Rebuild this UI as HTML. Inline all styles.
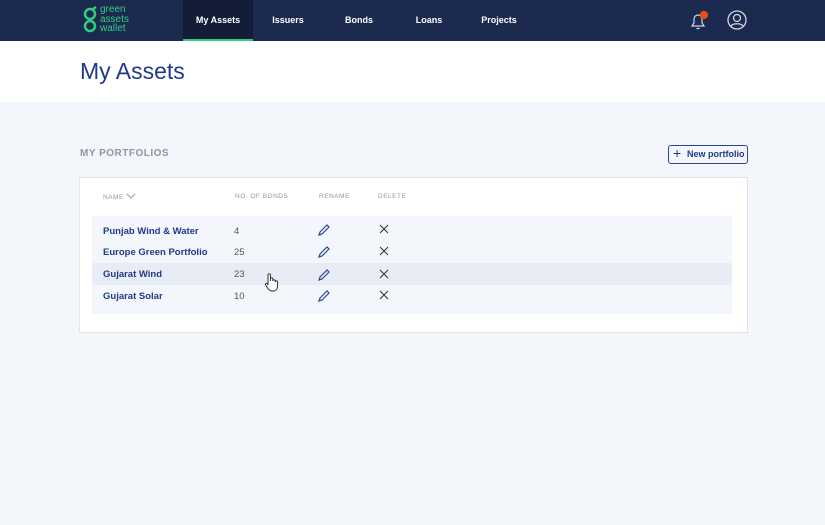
<!DOCTYPE html><html><head><style>
*{margin:0;padding:0;box-sizing:border-box}
body{width:825px;height:525px;background:#f3f6fa;font-family:"Liberation Sans",sans-serif;position:relative;overflow:hidden}
.hd{position:absolute;left:0;top:0;width:825px;height:41px;background:#1b2a4e}
.nav{position:absolute;top:0;height:41px;line-height:41px;color:#fff;font-size:9px;font-weight:bold;text-align:center}
.act{background:#131d38;border-bottom:2px solid #2fcf7f}
.logo{position:absolute;left:100px;top:5px;color:#2fcf7f;font-size:10px;line-height:9.5px}
.wb{position:absolute;top:41px;left:0;width:825px;height:61px;background:#fff}
h1{position:absolute;left:80px;top:58px;font-size:23px;font-weight:normal;color:#1f3a8a}
.sec{position:absolute;left:80px;top:148px;font-size:10px;font-weight:bold;color:#8e97aa;letter-spacing:.5px}
.btn{position:absolute;left:668px;top:145px;width:80px;height:19px;border:1px solid #2f4497;border-radius:3px;color:#1f3a8a;font-size:9px;font-weight:bold;line-height:17px;padding-left:18px}
.card{position:absolute;left:79px;top:177px;width:669px;height:156px;background:#fff;border:1px solid #dfe3ea}
.th{position:absolute;top:193px;font-size:6.5px;color:#8e97aa;letter-spacing:.5px}
.rows{position:absolute;left:92px;top:216px;width:640px;height:98px;background:#f3f6fa}
.r{position:absolute;left:92px;width:640px;height:22px;font-size:9.5px;line-height:22px}
.n{position:absolute;left:11px;color:#1f3a8a;font-weight:bold}
.c{position:absolute;left:142px;color:#555}
</style></head><body>
<div class="hd">
<svg style="position:absolute;left:82px;top:6px" width="16" height="28" viewBox="0 0 16 28"><g fill="none" stroke="#2fcf7f" stroke-width="2.5"><circle cx="8" cy="8" r="5"/><circle cx="8" cy="20" r="5"/><path d="M11 3l3-2"/></g></svg>
<div class="logo">green<br>assets<br>wallet</div>
<div class="nav act" style="left:183px;width:70px">My Assets</div>
<div class="nav" style="left:268px;width:40px">Issuers</div>
<div class="nav" style="left:340px;width:38px">Bonds</div>
<div class="nav" style="left:410px;width:38px">Loans</div>
<div class="nav" style="left:478px;width:42px">Projects</div>
<svg style="position:absolute;left:688px;top:10px" width="22" height="22" viewBox="0 0 22 22"><path d="M4 16h12l-2-3v-4a4 4 0 0 0-8 0v4z M8.5 18.5h3" fill="none" stroke="#cfd5e3" stroke-width="1.2"/><circle cx="16" cy="5" r="4" fill="#f04d12"/></svg>
<svg style="position:absolute;left:727px;top:10px" width="20" height="20" viewBox="0 0 20 20"><g fill="none" stroke="#cfd5e3" stroke-width="1.3"><circle cx="10" cy="10" r="9"/><circle cx="10" cy="8" r="3.5"/><path d="M4 16c2-3 10-3 12 0"/></g></svg>
</div>
<div class="wb"></div>
<h1>My Assets</h1>
<div class="sec">MY PORTFOLIOS</div>
<div class="btn"><span style="position:absolute;left:4px;top:-1px;font-size:14px;font-weight:normal">+</span>New portfolio</div>
<div class="card"></div>
<div class="th" style="left:103px">NAME <svg width="10" height="6" viewBox="0 0 10 6"><path d="M1 1l4 4 4-4" fill="none" stroke="#8e97aa"/></svg></div>
<div class="th" style="left:235px">NO. OF BONDS</div>
<div class="th" style="left:319px">RENAME</div>
<div class="th" style="left:378px">DELETE</div>
<div class="rows"></div>
<div class="r" style="top:263px;background:#e8ecf4"></div>
<div class="r" style="top:221px"><span class="n">Punjab Wind &amp; Water</span><span class="c">4</span></div>
<div class="r" style="top:242px"><span class="n">Europe Green Portfolio</span><span class="c">25</span></div>
<div class="r" style="top:264px"><span class="n">Gujarat Wind</span><span class="c">23</span></div>
<div class="r" style="top:286px"><span class="n">Gujarat Solar</span><span class="c">10</span></div>
<svg style="position:absolute;left:0;top:0" width="825" height="525"><g fill="none" stroke="#2f4497" stroke-width="1.2">
<path d="M320 232l7-7 2 2-7 7-3 1z"/><path d="M320 254l7-7 2 2-7 7-3 1z"/><path d="M320 277l7-7 2 2-7 7-3 1z"/><path d="M320 298l7-7 2 2-7 7-3 1z"/></g>
<g stroke="#333" stroke-width="1"><path d="M380 225l8 8M388 225l-8 8M380 247l8 8M388 247l-8 8M380 270l8 8M388 270l-8 8M380 291l8 8M388 291l-8 8"/></g>
<path d="M268 285v-10a1.2 1.2 0 0 1 2.4 0v6v-2a1.2 1.2 0 0 1 2.4 0v2a1.2 1.2 0 0 1 2.4 0v1a1.2 1.2 0 0 1 2.4 0v4c0 3-2 5-4 5h-2c-2 0-3-2-4-3l-2-3a1 1 0 0 1 2-1z" fill="#fff" stroke="#222" stroke-width=".9"/></svg>
</body></html>
